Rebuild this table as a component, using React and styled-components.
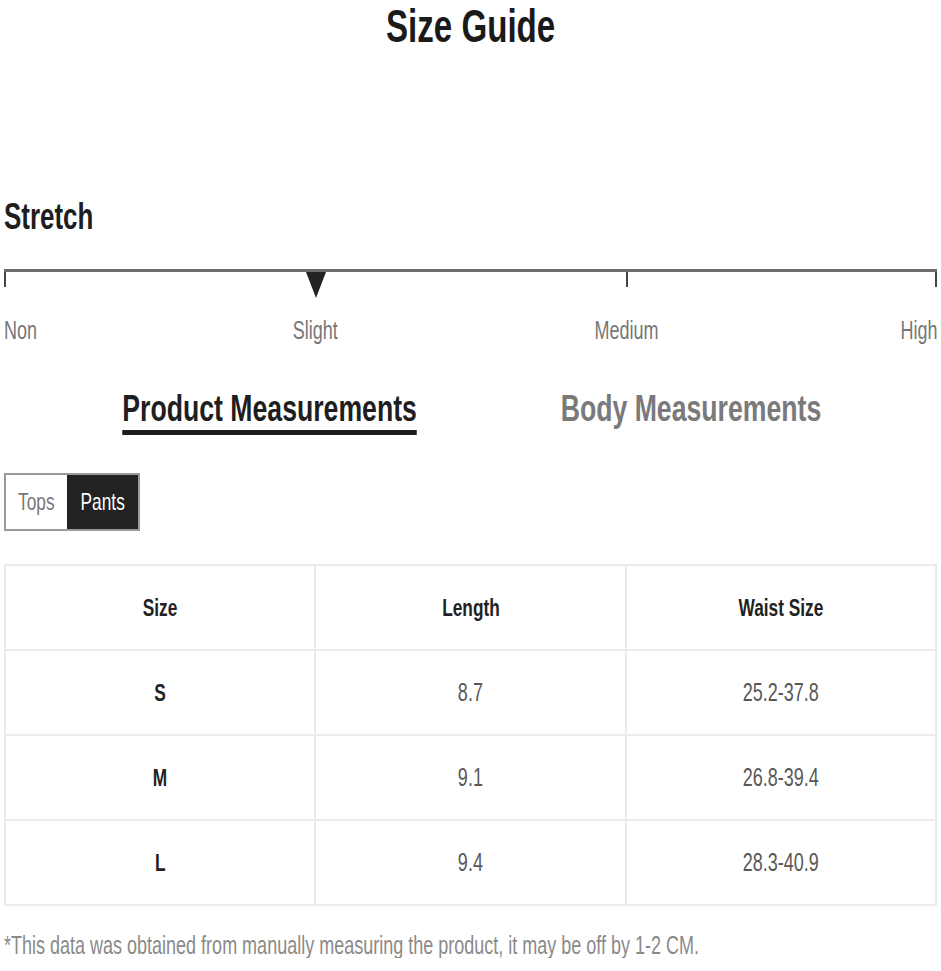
import styled, { createGlobalStyle } from 'styled-components'

// the whole reference is squeezed horizontally, so every text run is narrowed the same way
const SX = 0.72;

const GlobalStyle = createGlobalStyle`
    body {
        margin: 0;
        background: #fff;
        font-family: "Liberation Sans", Arial, sans-serif;
    }
`;

const Page = styled.div`
    padding: 3px 4px 0 4px;
    width: 941px;
    box-sizing: border-box;
`;

const Txt = styled.span`
    display: inline-block;
    white-space: nowrap;
    transform: scaleX(${SX});
    transform-origin: ${props => props.$origin || 'center'};
`;

const Title = styled.h1`
    margin: 0;
    text-align: center;
    font-size: 46px;
    line-height: 1;
    font-weight: bold;
    color: #1a1a1a;
`;

const SectionTitle = styled.h2`
    margin: 150px 0 0 0;
    font-size: 36px;
    line-height: 1;
    font-weight: bold;
    color: #1e1e1e;
`;

const Bar = styled.div`
    margin-top: 34px;
    border-top: 3px solid #6b6b6b;
    display: grid;
    grid-template-columns: repeat(3, 1fr);
`;

const Segment = styled.div`
    position: relative;
    height: 15px;
    border-left: 2px solid #444;
    border-right: ${props => props.$last ? '2px solid #444' : 'none'};
`;

const Marker = styled.div`
    position: absolute;
    left: -11px;
    top: 0;
    width: 0;
    height: 0;
    border-left: 10px solid transparent;
    border-right: 10px solid transparent;
    border-top: 26px solid #222;
`;

const Labels = styled.div`
    margin-top: 31px;
    display: grid;
    grid-template-columns: repeat(6, 1fr);
    font-size: 25px;
    line-height: 1;
    color: #777;
`;

const Label = styled.div`
    grid-column: ${props => props.$col};
    text-align: ${props => props.$align};
`;

const TabRow = styled.div`
    margin-top: 47px;
    padding-left: 55px;
    display: grid;
    grid-template-columns: 421px 421px;
`;

const Tab = styled.div`
    text-align: center;
    font-size: 37px;
    line-height: 1;
    font-weight: bold;
    color: ${props => props.$active ? '#1e1e1e' : '#7a7a7a'};

    ${Txt} {
        padding-bottom: 3px;
        border-bottom: 5px solid ${props => props.$active ? '#1e1e1e' : 'transparent'};
    }
`;

const Toggle = styled.div`
    margin-top: 38px;
    display: inline-flex;
    border: 2px solid #9a9a9a;
`;

const ToggleButton = styled.div`
    width: ${props => props.$width}px;
    height: 54px;
    display: flex;
    align-items: center;
    justify-content: center;
    font-size: 24px;
    background: ${props => props.$active ? '#222' : '#fff'};
    color: ${props => props.$active ? '#fff' : '#777'};
`;

const Table = styled.table`
    margin-top: 33px;
    width: 100%;
    border-collapse: collapse;
    table-layout: fixed;
`;

const Cell = styled.td`
    height: 83px;
    border: 2px solid #ebebeb;
    text-align: center;
    vertical-align: middle;
    font-size: ${props => props.$bold ? '24px' : '25px'};
    font-weight: ${props => props.$bold ? 'bold' : 'normal'};
    color: ${props => props.$bold ? '#222' : '#585858'};
    padding: 0;
`;

const Note = styled.p`
    margin: 27px 0 0 0;
    font-size: 25px;
    line-height: 1;
    color: #8a8a8a;
`;

const rows = [
    ['S', '8.7', '25.2-37.8'],
    ['M', '9.1', '26.8-39.4'],
    ['L', '9.4', '28.3-40.9'],
];

const App = () => {
    return (
        <>
        <GlobalStyle />
        <Page>
            <Title><Txt>Size Guide</Txt></Title>

            <SectionTitle><Txt $origin="left">Stretch</Txt></SectionTitle>
            <Bar>
                <Segment />
                <Segment><Marker /></Segment>
                <Segment $last />
            </Bar>
            <Labels>
                <Label $col="1" $align="left"><Txt $origin="left">Non</Txt></Label>
                <Label $col="2 / 4" $align="center"><Txt>Slight</Txt></Label>
                <Label $col="4 / 6" $align="center"><Txt>Medium</Txt></Label>
                <Label $col="6" $align="right"><Txt $origin="right">High</Txt></Label>
            </Labels>

            <TabRow>
                <Tab $active><Txt>Product Measurements</Txt></Tab>
                <Tab><Txt>Body Measurements</Txt></Tab>
            </TabRow>

            <Toggle>
                <ToggleButton $width={61}><Txt>Tops</Txt></ToggleButton>
                <ToggleButton $width={71} $active><Txt>Pants</Txt></ToggleButton>
            </Toggle>

            <Table>
                <tbody>
                    <tr>
                        <Cell $bold><Txt>Size</Txt></Cell>
                        <Cell $bold><Txt>Length</Txt></Cell>
                        <Cell $bold><Txt>Waist Size</Txt></Cell>
                    </tr>
                    {rows.map(row => (
                        <tr key={row[0]}>
                            <Cell $bold><Txt>{row[0]}</Txt></Cell>
                            <Cell><Txt>{row[1]}</Txt></Cell>
                            <Cell><Txt>{row[2]}</Txt></Cell>
                        </tr>
                    ))}
                </tbody>
            </Table>

            <Note><Txt $origin="left">*This data was obtained from manually measuring the product, it may be off by 1-2 CM.</Txt></Note>
        </Page>
        </>
    )
}

export default App;
